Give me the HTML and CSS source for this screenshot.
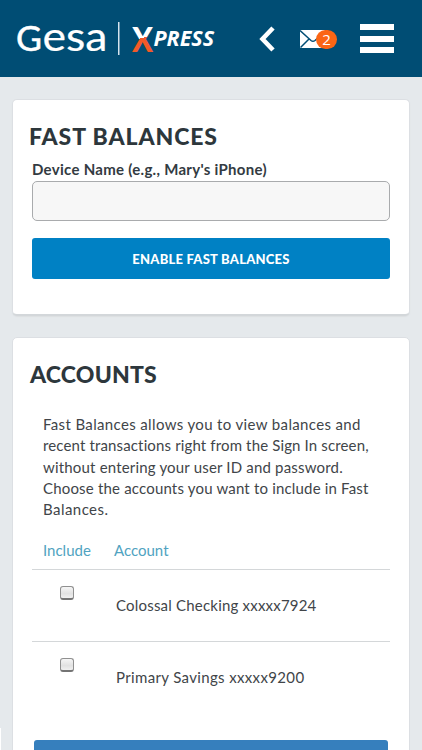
FILE: index.html
```html
<!DOCTYPE html>
<html lang="en">

<head>
    <meta charset="UTF-8">
    <meta name="viewport" content="width=device-width, initial-scale=1">
    <title>Fast Balances</title>
    <link rel="stylesheet" href="styles.css">
</head>

<body>
    <header class="header">
        <svg class="logo" width="200" height="36" viewBox="0 0 200 36" role="img" aria-label="Gesa Xpress">
            <defs>
                <linearGradient id="xfill" gradientUnits="userSpaceOnUse" x1="126" y1="0" x2="133" y2="28">
                    <stop offset="0.56" stop-color="#fff"/>
                    <stop offset="0.56" stop-color="#f15a29"/>
                </linearGradient>
            </defs>
            <text class="logo-g" x="-1" y="30" textLength="26" lengthAdjust="spacingAndGlyphs">G</text>
            <text class="logo-esa" x="25.5" y="30" textLength="65" lengthAdjust="spacingAndGlyphs">esa</text>
            <rect x="101" y="1" width="1.5" height="33" fill="#d5e4ee"/>
            <text class="logo-x" x="115" y="30.5" fill="url(#xfill)" textLength="21" lengthAdjust="spacingAndGlyphs">X</text>
            <text class="logo-press" x="136.5" y="25" textLength="60.5" lengthAdjust="spacingAndGlyphs">PRESS</text>
        </svg>
        <a href="#" class="back" aria-label="Back">
            <svg width="16" height="26" viewBox="0 0 16 26"><path d="M14 2 L3.5 13 L14 24" fill="none" stroke="#fff" stroke-width="4.6"/></svg>
        </a>
        <a href="#" class="mail">
            <svg width="26" height="18" viewBox="0 0 26 18">
                <rect width="26" height="18" fill="#fff"/>
                <path d="M0 0.5 L11 10.5 Q13 12 15 10.5 L26 0.5 M0.5 17.5 L9 9 M25.5 17.5 L17 9" fill="none" stroke="#004d74" stroke-width="1.5"/>
            </svg>
            <span class="badge">2</span>
        </a>
        <a href="#" class="menu" aria-label="Menu">
            <span></span>
            <span></span>
            <span></span>
        </a>
    </header>

    <main class="content">
        <section class="card card-device">
            <h2 class="title">FAST BALANCES</h2>
            <label class="label" for="device">Device Name (e.g., Mary's iPhone)</label>
            <input class="input" id="device" type="text">
            <button class="btn" type="button">ENABLE FAST BALANCES</button>
        </section>

        <section class="card card-accounts">
            <h2 class="title title-accounts">ACCOUNTS</h2>
            <p class="intro">
                <span class="l1">Fast Balances allows you to view balances and</span><br>
                <span class="l2">recent transactions right from the Sign In screen,</span><br>
                <span class="l3">without entering your user ID and password.</span><br>
                <span class="l4">Choose the accounts you want to include in Fast</span><br>
                <span class="l5">Balances.</span>
            </p>
            <div class="accounts">
                <div class="row row-head">
                    <span>Include</span>
                    <span>Account</span>
                </div>
                <div class="row">
                    <input class="check" type="checkbox" aria-label="Include Colossal Checking">
                    <span class="name">Colossal Checking xxxxx7924</span>
                </div>
                <div class="row">
                    <input class="check" type="checkbox" aria-label="Include Primary Savings">
                    <span class="name name-savings">Primary Savings xxxxx9200</span>
                </div>
            </div>
            <button class="btn-save" type="button" aria-label="Save"></button>
        </section>
    </main>
    <div class="edge"></div>
</body>

</html>
```
FILE: styles.css
```css
* {
    box-sizing: border-box;
}

body {
    margin: 0;
    height: 750px;
    overflow: hidden;
    position: relative;
    background: #e5e9ec;
    color: #414549;
    font-family: Lato, "Open Sans", sans-serif;
    font-size: 15px;
}

.header {
    height: 77px;
    padding-left: 17px;
    display: flex;
    align-items: center;
    background: #004d74;
}

.logo {
    flex: none;
    overflow: visible;
}

.logo-g,
.logo-esa {
    font: 400 35px Lato, sans-serif;
    fill: #fff;
    stroke: #fff;
    stroke-width: 0.5px;
}

.logo-esa {
    font-size: 40px;
    stroke-width: 0.2px;
}

.logo-x {
    font: 900 35px Lato, sans-serif;
}

.logo-press {
    font: italic 700 21px "Open Sans", sans-serif;
    fill: #fff;
}

.back {
    margin-left: 42px;
    height: 26px;
}

.mail {
    position: relative;
    margin-left: 25px;
    height: 18px;
}

.back svg,
.mail svg {
    display: block;
}

.badge {
    position: absolute;
    left: 16px;
    top: 0;
    width: 21px;
    height: 19px;
    border-radius: 10px;
    background: #fb6514;
    color: #fff;
    font: 15px/19px "Open Sans", sans-serif;
    text-align: center;
}

.menu {
    width: 34px;
    margin-left: 34px;
    display: flex;
    flex-direction: column;
    gap: 5.5px;
}

.menu span {
    height: 6px;
    background: #fff;
}

.content {
    padding: 22px 12px 0;
}

.card {
    background: #fff;
    border: 1px solid #dcdfe3;
    border-radius: 5px;
    padding: 0 19px;
}

.card-device {
    height: 217px;
    padding-top: 22px;
    border-bottom: 2px solid #d3d7da;
    box-shadow: 0 1px 1px #dcdfe2;
}

.card-accounts {
    height: 450px;
    margin-top: 21px;
    padding-top: 22px;
}

.title {
    margin: 0 0 0 -3px;
    color: #2d373c;
    font-size: 23px;
    font-weight: 900;
    line-height: 28px;
    letter-spacing: 0.9px;
}

.title-accounts {
    margin-left: -2px;
    letter-spacing: 0.2px;
}

.label {
    display: block;
    height: 31px;
    padding-top: 9px;
    color: #333b42;
    font-weight: 700;
    line-height: 20px;
    letter-spacing: 0.29px;
    white-space: nowrap;
}

.input {
    display: block;
    width: 100%;
    height: 40px;
    border: 1px solid #a9abad;
    border-radius: 5px;
    background: #f7f7f7;
}

.btn {
    display: block;
    width: 100%;
    height: 41px;
    margin-top: 17px;
    padding: 1px 0 0;
    border: 0;
    border-radius: 3px;
    background: #0081c4;
    color: #fff;
    font: 900 13px/40px Lato, sans-serif;
    letter-spacing: 0.23px;
    text-align: center;
}

.intro {
    margin: 26px 0 0 11px;
    font-size: 15px;
    line-height: 21.3px;
    white-space: nowrap;
}

.l1 {
    letter-spacing: 0.36px;
}

.l2 {
    letter-spacing: 0.14px;
}

.l3,
.l4 {
    letter-spacing: 0.18px;
}

.l5 {
    letter-spacing: 0.45px;
}

.row {
    height: 72px;
    display: grid;
    grid-template-columns: 84px 1fr;
    border-top: 1px solid #d4d7d9;
}

.row-head {
    height: 49px;
    padding-left: 11px;
    grid-template-columns: 71px 1fr;
    border-top: 0;
    color: #50a3c1;
    line-height: 60px;
}

.name {
    line-height: 71px;
    letter-spacing: 0.2px;
}

.name-savings {
    letter-spacing: 0.35px;
}

.check {
    appearance: none;
    width: 14px;
    height: 14px;
    margin: 16px 0 0 28px;
    border: 1px solid #909090;
    border-bottom: 2px solid #747474;
    border-radius: 3px;
    background: linear-gradient(#f6f6f6, #e2e2e2 60%, #f1f1f1);
}

.btn-save {
    display: block;
    width: 354px;
    height: 40px;
    margin: 27px 0 0 2px;
    border: 0;
    border-radius: 3px;
    background: #367fbd;
}

/* sliver of the page behind */
.edge {
    position: absolute;
    left: 0;
    bottom: 0;
    width: 1px;
    height: 22px;
    background: #fff;
}
```
